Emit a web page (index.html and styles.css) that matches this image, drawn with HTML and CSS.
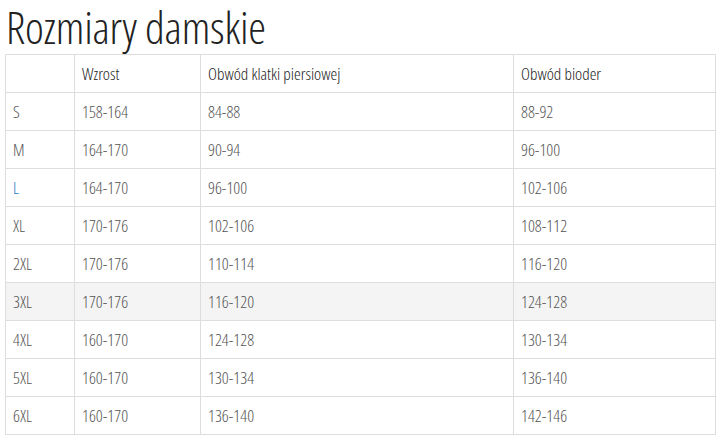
FILE: index.html
```html
<!DOCTYPE html>
<html lang="pl">
<head>
<meta charset="utf-8">
<title>Rozmiary damskie</title>
<link rel="stylesheet" href="styles.css">
</head>
<body>
<div class="page">
  <h1 class="title">Rozmiary damskie</h1>
  <table class="sizes">
    <colgroup>
      <col class="c1"><col class="c2"><col class="c3"><col class="c4">
    </colgroup>
    <thead>
      <tr><th></th><th>Wzrost</th><th>Obwód klatki piersiowej</th><th>Obwód bioder</th></tr>
    </thead>
    <tbody>
      <tr><td>S</td><td>158-164</td><td>84-88</td><td>88-92</td></tr>
      <tr><td>M</td><td>164-170</td><td>90-94</td><td>96-100</td></tr>
      <tr><td class="link">L</td><td>164-170</td><td>96-100</td><td>102-106</td></tr>
      <tr><td>XL</td><td>170-176</td><td>102-106</td><td>108-112</td></tr>
      <tr><td>2XL</td><td>170-176</td><td>110-114</td><td>116-120</td></tr>
      <tr class="hover"><td>3XL</td><td>170-176</td><td>116-120</td><td>124-128</td></tr>
      <tr><td>4XL</td><td>160-170</td><td>124-128</td><td>130-134</td></tr>
      <tr><td>5XL</td><td>160-170</td><td>130-134</td><td>136-140</td></tr>
      <tr><td>6XL</td><td>160-170</td><td>136-140</td><td>142-146</td></tr>
    </tbody>
  </table>
</div>
</body>
</html>
```
FILE: styles.css
```css
html, body {
  margin: 0;
  padding: 0;
  background: #fff;
}
.page {
  padding: 0 7px 0 5px;
  font-family: "Open Sans", "Liberation Sans", sans-serif;
  font-stretch: 75%;
}
.title {
  margin: -3px 0 -3px 1px;
  font-size: 45px;
  line-height: 60px;
  font-weight: 300;
  color: #222;
  letter-spacing: -0.2px;
}
.sizes {
  width: 710px;
  border-collapse: collapse;
  table-layout: fixed;
  font-size: 17px;
}
.c1 { width: 69px; }
.c2 { width: 126px; }
.c3 { width: 313px; }
.c4 { width: 202px; }
.sizes th,
.sizes td {
  border: 1px solid #ddd;
  height: 38px;
  padding: 0 7px;
  text-align: left;
  vertical-align: middle;
  box-sizing: border-box;
}
.sizes th {
  font-weight: 300;
  color: #222;
}
.sizes td {
  font-weight: 300;
  color: #555;
}
.sizes td.link {
  color: #2a7ac0;
}
.sizes tr.hover td {
  background: #f4f4f4;
}
```
